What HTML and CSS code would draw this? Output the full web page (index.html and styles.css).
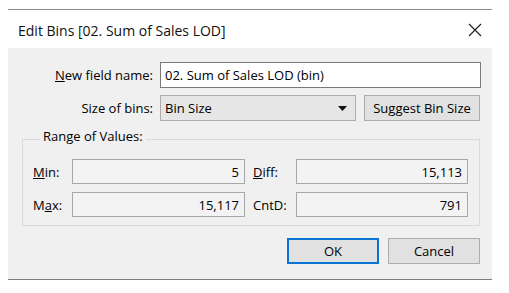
FILE: index.html
```html
<!DOCTYPE html>
<html lang="en">
<head>
<meta charset="utf-8">
<title>Edit Bins</title>
<link rel="stylesheet" href="styles.css">
</head>
<body>
<div class="dialog">
  <div class="titlebar">
    <span class="title">Edit Bins [02. Sum of Sales LOD]</span>
    <svg class="close" width="14" height="14" viewBox="0 0 14 14"><path d="M1 1 L13 13 M13 1 L1 13" stroke="#1a1a1a" stroke-width="1.1" fill="none"/></svg>
  </div>
  <div class="content">
    <div class="row">
      <span class="label"><u>N</u>ew field name:</span>
      <span class="field edit">02. Sum of Sales LOD (bin)</span>
    </div>
    <div class="row row2">
      <span class="label">Size of bins:</span>
      <span class="field select"><span>Bin Size</span><svg class="arrow" width="9" height="5" viewBox="0 0 9 5"><path d="M0 0 L9 0 L4.5 5 Z" fill="#111"/></svg></span>
      <span class="btn suggest">Suggest Bin Size</span>
    </div>
    <fieldset class="group">
      <legend>Range of Values:</legend>
      <div class="vrow">
        <span class="vlabel"><u>M</u>in:</span>
        <span class="field ro">5</span>
        <span class="vlabel second"><u>D</u>iff:</span>
        <span class="field ro">15,113</span>
      </div>
      <div class="vrow">
        <span class="vlabel">M<u>a</u>x:</span>
        <span class="field ro">15,117</span>
        <span class="vlabel second">CntD:</span>
        <span class="field ro">791</span>
      </div>
    </fieldset>
    <div class="actions">
      <span class="btn ok">OK</span>
      <span class="btn">Cancel</span>
    </div>
  </div>
</div>
</body>
</html>
```
FILE: styles.css
```css
* { box-sizing: border-box; }
html, body { margin: 0; padding: 0; background: #ffffff; }
body {
  font-family: "Open Sans", "Noto Sans", sans-serif;
  font-size: 13px;
  color: #000;
  padding-top: 9px;
}
.dialog {
  margin-left: 8px;
  width: 484px;
  border-top: 1px solid #8c8c8c;
  border-bottom: 1px solid #7d7d7d;
}
.titlebar {
  height: 38px;
  background: #fff;
  display: flex;
  align-items: center;
  justify-content: space-between;
  padding: 0 10px 0 10px;
}
.title { font-size: 14px; color: #111; padding-top: 2px; }
.close { margin-right: 0; margin-top: 2px; }
.content {
  background: #f0f0f0;
  height: 231px;
  padding: 14px 11px 0 14px;
}
.row { display: flex; align-items: center; height: 26px; }
.row2 { margin-top: 7px; }
.label { width: 131px; text-align: right; padding-right: 0; margin-right: 7px; white-space: nowrap; }
.field {
  display: flex;
  align-items: center;
  height: 26px;
  border: 1px solid #a5a5a5;
  padding: 0 4px;
  white-space: nowrap;
}
.edit { flex: 1; background: #fff; border-color: #7a7a7a; }
.select {
  width: 196px;
  background: #e6e6e6;
  border-color: #acacac;
  justify-content: space-between;
  padding-right: 8px;
}
.arrow { display: block; }
.btn {
  display: flex;
  align-items: center;
  justify-content: center;
  height: 26px;
  background: #e1e1e1;
  border: 1px solid #adadad;
  white-space: nowrap;
}
.suggest { width: 116px; margin-left: 8px; }
.group {
  margin: 7px 0 0 0;
  width: 458px;
  border: 1px solid #dadada;
  padding: 9px 11px 8px 10px;
}
.group legend {
  margin-left: 7px;
  padding: 0 3px 5px 3px;
  line-height: 17px;
}
.vrow { display: flex; align-items: center; height: 25px; }
.vrow + .vrow { margin-top: 8px; }
.vlabel { width: 39px; white-space: nowrap; }
.vlabel.second { width: 43px; margin-left: 8px; }
.ro {
  width: 173px;
  height: 25px;
  background: #f3f3f3;
  border-color: #a8a8a8;
  justify-content: flex-end;
  padding-right: 5px;
}
.vrow .ro:last-child { width: 172px; }
.actions {
  display: flex;
  justify-content: flex-end;
  gap: 9px;
  margin-top: 12px;
  width: 458px;
}
.actions .btn { width: 92px; }
.ok { border: 2px solid #0a74d4; }
```
